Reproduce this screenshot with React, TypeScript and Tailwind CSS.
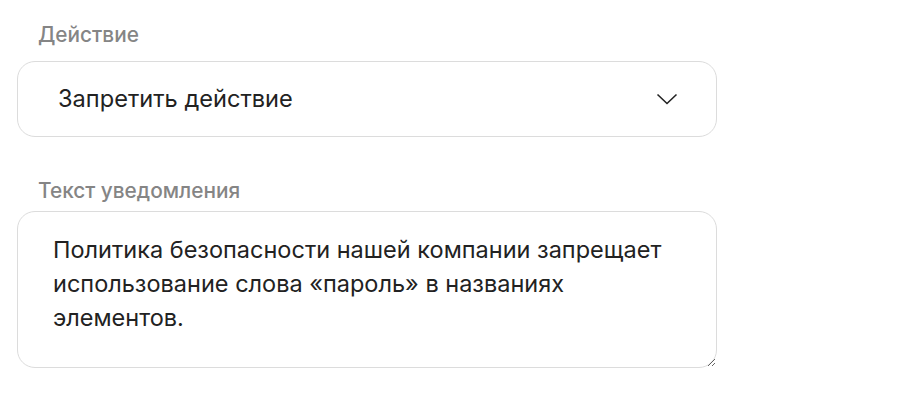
import React from 'react';

const App: React.FC = () => {
  return (
    <div className="w-[918px] h-[398px] bg-white font-['Inter',sans-serif] pl-[17px] pt-[24px]">
      <div className="w-[700px] flex flex-col">
        <label className="pl-[21px] text-[20.8px] font-medium text-[#858585] leading-[22px]">Действие</label>
        <div className="mt-[15px] h-[76px] rounded-[18px] border border-[#dcdcdc] flex items-center justify-between pl-[40px] pr-[38px]">
          <span className="text-[23.6px] text-[#222222] leading-[28px]">Запретить действие</span>
          <svg width="22" height="12" viewBox="0 0 22 12" fill="none" stroke="#222" strokeWidth="1.6">
            <path d="M1.5 1.5 L11 10.5 L20.5 1.5" />
          </svg>
        </div>
        <label className="mt-[43px] pl-[21px] text-[20.8px] font-medium text-[#858585] leading-[22px]">Текст уведомления</label>
        <textarea
          readOnly
          defaultValue="Политика безопасности нашей компании запрещает использование слова «пароль» в названиях элементов."
          className="mt-[9px] h-[157px] w-[700px] rounded-[18px] border border-[#dcdcdc] pl-[35px] pr-[24px] pt-[21px] text-[23.5px] leading-[34px] text-[#222222] outline-none"
        />
      </div>
    </div>
  );
};

export default App;
